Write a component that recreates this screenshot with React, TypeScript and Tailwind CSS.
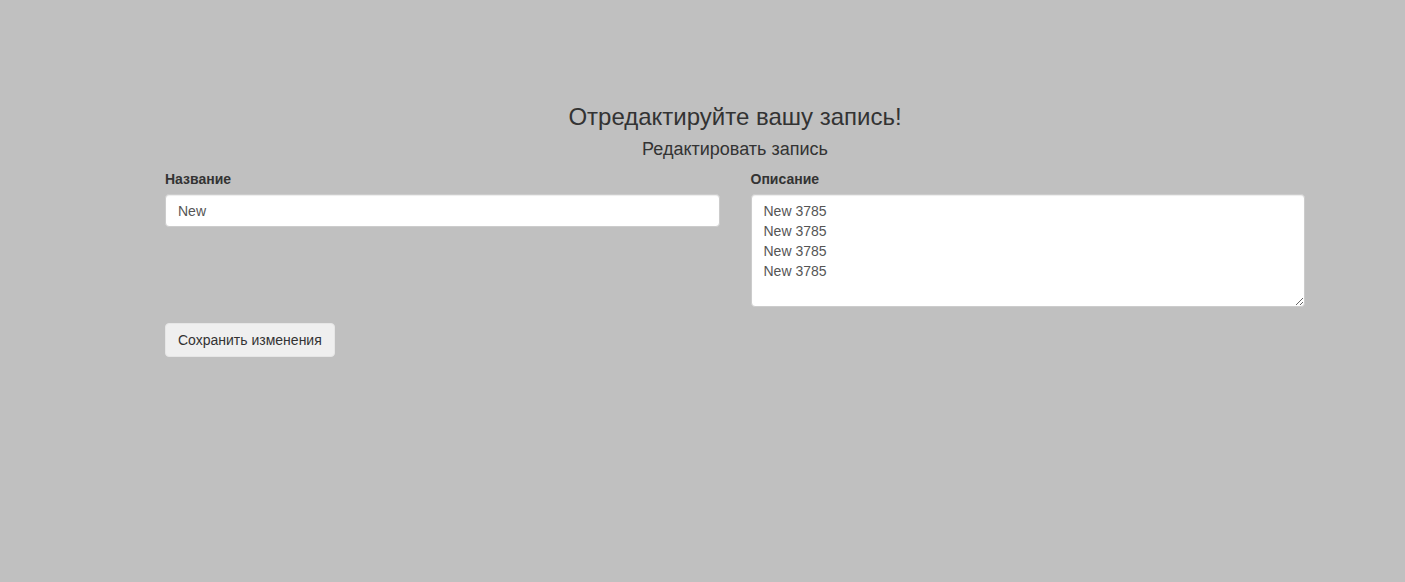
import React from "react";

export default function App() {
  const desc = "New 3785\nNew 3785\nNew 3785\nNew 3785";
  return (
    <div
      className="min-h-[582px] w-full bg-[#c0c0c0] text-[#333] text-[14px]"
      style={{ fontFamily: '"Liberation Sans", Arial, sans-serif' }}
    >
      <div className="ml-[165px] w-[1140px] pt-[104px]">
        <h2 className="text-center text-[24px] leading-[26px] text-[#333]">
          Отредактируйте вашу запись!
        </h2>
        <h3 className="mt-[9px] text-center text-[18px] leading-[20px] text-[#333]">
          Редактировать запись
        </h3>
        <div className="mt-[10px] grid grid-cols-2 gap-x-[31px]">
          <div>
            <label className="block font-bold leading-[20px] mb-[5px]">Название</label>
            <input
              defaultValue="New"
              className="block w-full h-[33px] rounded-[4px] border border-[#ccc] bg-white px-[12px] text-[14px] text-[#555] shadow-[inset_0_1px_1px_rgba(0,0,0,0.075)] outline-none"
            />
          </div>
          <div>
            <label className="block font-bold leading-[20px] mb-[5px]">Описание</label>
            <textarea
              defaultValue={desc}
              rows={5}
              className="block w-full h-[113px] rounded-[4px] border border-[#ccc] bg-white px-[12px] py-[6px] text-[14px] leading-[20px] text-[#555] shadow-[inset_0_1px_1px_rgba(0,0,0,0.075)] outline-none resize-y"
            />
          </div>
        </div>
        <button className="mt-[16px] h-[34px] rounded-[4px] bg-[#efefef] border border-[#e6e6e6] px-[12px] text-[14px] text-[#333]">
          Сохранить изменения
        </button>
      </div>
    </div>
  );
}
